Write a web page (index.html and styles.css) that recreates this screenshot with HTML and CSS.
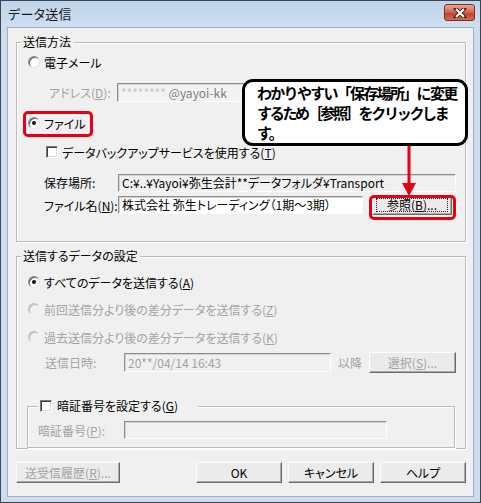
FILE: index.html
```
<!DOCTYPE html>
<html lang="ja">
<head>
<meta charset="utf-8">
<title>データ送信</title>
<link rel="stylesheet" href="styles.css">
</head>
<body>
<div class="window">
  <div class="titlebar">
    <span class="title">データ送信</span>
    <span class="close"><svg width="14" height="10" viewBox="0 0 14 10"><path d="M3 1 L11 9 M11 1 L3 9" stroke="#4a1a12" stroke-width="4" stroke-linecap="square"/><path d="M3 1 L11 9 M11 1 L3 9" stroke="#fff" stroke-width="2.2"/></svg></span>
  </div>
  <div class="client">
    <div class="group g1">
      <div class="legend">送信方法</div>
      <div class="row r-mail"><span class="radio"></span><span class="lbl">電子メール</span></div>
      <div class="row r-addr indent2 dis">
        <span class="flabel w68">アドレス(<u>D</u>):</span>
        <span class="field addr"><span class="stars">********</span> @yayoi-kk</span>
      </div>
      <div class="row r-file"><span class="radio on"></span><span class="lbl">ファイル</span></div>
      <div class="row r-chk"><span class="check"></span><span class="lbl">データバックアップサービスを使用する(<u>T</u>)</span></div>
      <div class="row r-loc">
        <span class="flabel w74">保存場所:</span>
        <span class="field ro wide">C:¥..¥Yayoi¥弥生会計**データフォルダ¥Transport</span>
      </div>
      <div class="row r-name">
        <span class="flabel w74">ファイル名(<u>N</u>):</span>
        <span class="field white fname">株式会社 弥生トレーディング（1期〜3期）</span>
        <span class="btn ref"><span class="focus">参照(<u>B</u>)...</span></span>
      </div>
    </div>

    <div class="group g2">
      <div class="legend">送信するデータの設定</div>
      <div class="row r-a"><span class="radio on"></span><span class="lbl">すべてのデータを送信する(<u>A</u>)</span></div>
      <div class="row r-z dis"><span class="radio"></span><span class="lbl">前回送信分より後の差分データを送信する(<u>Z</u>)</span></div>
      <div class="row r-k dis"><span class="radio"></span><span class="lbl">過去送信分より後の差分データを送信する(<u>K</u>)</span></div>
      <div class="row r-date dis">
        <span class="flabel w79">送信日時:</span>
        <span class="field date">20**/04/14 16:43</span>
        <span class="after">以降</span>
        <span class="btn sel">選択(<u>S</u>)...</span>
      </div>
      <div class="group g3">
        <div class="legend chklegend"><span class="check"></span><span class="lbl">暗証番号を設定する(<u>G</u>)</span></div>
        <div class="row r-pin dis">
          <span class="flabel w86">暗証番号(<u>P</u>):</span>
          <span class="field pin"></span>
        </div>
      </div>
    </div>

    <div class="buttons">
      <span class="btn b-hist dis">送受信履歴(<u>R</u>)...</span>
      <span class="btn b-ok">OK</span>
      <span class="btn b-std">キャンセル</span>
      <span class="btn b-std">ヘルプ</span>
    </div>
  </div>

  <div class="hl hl-file"></div>
  <div class="hl hl-ref"></div>
  <svg class="arrow" width="20" height="56" viewBox="0 0 20 56"><path d="M10 0 V42" stroke="#e60012" stroke-width="3"/><path d="M3 38 L17 38 L10 51 Z" fill="#e60012"/></svg>
  <div class="callout">わかりやすい「保存場所」に変更<br><span class="tight">するため［参照］をクリックしま</span><br>す。</div>
</div>
</body>
</html>
```
FILE: styles.css
```
* { box-sizing: border-box; }
html, body { margin: 0; padding: 0; background: #fff; }
body {
  font-family: "Noto Sans CJK JP", "Noto Sans", sans-serif;
  font-size: 12px;
  color: #000;
  font-feature-settings: "palt";
}
u { text-decoration: underline; text-underline-offset: 1px; }

.window {
  position: relative;
  width: 481px;
  height: 503px;
  border: 1px solid #3d4650;
  background: #cbdcee;
  display: flex;
  flex-direction: column;
}
.titlebar {
  height: 26px;
  flex: none;
  display: flex;
  justify-content: space-between;
  align-items: flex-start;
  padding-left: 7px;
  padding-right: 5px;
  background: linear-gradient(#bed3ea, #cfdff0);
}
.title {
  font-size: 13px;
  line-height: 26px;
  color: #1a1a1a;
  letter-spacing: 0.3px;
}
.close {
  margin-top: 3px;
  width: 31px;
  height: 17px;
  border: 1px solid #7a3026;
  border-radius: 3px;
  background: linear-gradient(#e9a99a, #d2624d 50%, #c0402b 51%, #d46a50);
  display: flex;
  align-items: center;
  justify-content: center;
}
.client {
  flex: 1;
  margin: 0 6px 5px 6px;
  background: #f0f0f0;
  border: 1px solid #9fb1c6;
  padding: 0 7px 0 8px;
  display: flex;
  flex-direction: column;
}

.group {
  border: 1px solid #bcbcbc;
  box-shadow: inset 1px 1px 0 #fff, 1px 1px 0 #fff;
  display: flex;
  flex-direction: column;
}
.legend {
  margin: -9px 0 0 4px;
  padding: 0 2px;
  background: #f0f0f0;
  line-height: 16px;
  height: 16px;
  align-self: flex-start;
}
.g1 { margin-top: 14px; height: 200px; }
.g2 { margin-top: 14px; height: 193px; }
.g3 { margin: 33px 10px 0 10px; height: 49px; }
.chklegend {
  margin-left: 10px;
  padding-left: 2px;
  width: 160px;
  display: flex;
  align-items: center;
}

.row {
  height: 20px;
  display: flex;
  align-items: center;
  flex: none;
}
.dis { color: #a3a3a3; }
.r-mail { margin-top: 2px; padding-left: 11px; }
.r-addr { margin-top: 11px; padding-left: 32px; height: 19px; }
.r-file { margin-top: 11px; padding-left: 11px; }
.r-chk { margin-top: 9px; padding-left: 29px; }
.r-loc { margin-top: 11px; padding-left: 27px; height: 19px; }
.r-name { margin-top: 3px; padding-left: 27px; }
.r-a { margin-top: 8px; padding-left: 11px; }
.r-z { margin-top: 7px; padding-left: 11px; }
.r-k { margin-top: 8px; padding-left: 11px; }
.r-date { margin-top: 5px; padding-left: 28px; height: 21px; }
.r-pin { margin-top: 6px; padding-left: 10px; }

.lbl { margin-left: 4px; white-space: nowrap; }
.flabel { white-space: nowrap; flex: none; }
.w68 { width: 68px; }
.w74 { width: 74px; }
.w79 { width: 79px; }
.w86 { width: 86px; }

.radio {
  flex: none;
  width: 12px;
  height: 12px;
  border-radius: 50%;
  border: 1px solid;
  border-color: #8a8a8a #e4e4e4 #e4e4e4 #8a8a8a;
  background: #fff;
  box-shadow: inset 1px 1px 0 #5c5c5c;
  position: relative;
}
.dis .radio { box-shadow: inset 1px 1px 0 #bdbdbd; border-color: #c0c0c0 #f4f4f4 #f4f4f4 #c0c0c0; background: #f0f0f0; }
.radio.on::after {
  content: "";
  position: absolute;
  left: 3px;
  top: 3px;
  width: 4px;
  height: 4px;
  border-radius: 50%;
  background: #111;
}
.check {
  flex: none;
  width: 12px;
  height: 12px;
  border: 1px solid;
  border-color: #7a7a7a #fff #fff #7a7a7a;
  background: #fff;
  box-shadow: inset 1px 1px 0 #3f3f3f, inset -1px -1px 0 #dcdcdc;
}
.chklegend .lbl { margin-left: 5px; }

.field {
  flex: none;
  height: 19px;
  border: 1px solid;
  border-color: #8d8d8d #fdfdfd #fdfdfd #8d8d8d;
  box-shadow: inset 1px 1px 0 #d4d4d4;
  padding-left: 3px;
  line-height: 17px;
  white-space: nowrap;
  overflow: hidden;
}
.addr { width: 338px; color: #7d7d7d; background: #f3f3f3; }
.stars { color: #c6c6c6; }
.ro { background: #f0f0f0; }
.wide { width: 338px; height: 18px; line-height: 16px; }
.white { background: #fff; }
.fname { width: 245px; height: 18px; line-height: 16px; }
.date { width: 207px; margin-left: 0; }
.after { margin-left: 7px; width: 31px; }
.pin { width: 263px; height: 18px; }

.btn {
  flex: none;
  display: flex;
  align-items: center;
  justify-content: center;
  background: #ebebeb;
  border: 1px solid;
  border-color: #fdfdfd #6a6a6a #6a6a6a #fdfdfd;
  box-shadow: inset -1px -1px 0 #a9a9a9;
  white-space: nowrap;
}
.ref { margin-left: 9px; width: 80px; height: 20px; }
.focus {
  display: block;
  width: 72px;
  height: 14px;
  line-height: 12px;
  text-align: center;
  border: 1px dotted #222;
}
.sel { margin-left: 0; width: 87px; height: 21px; }

.buttons {
  margin-top: 13px;
  display: flex;
  gap: 6px;
}
.buttons .btn { height: 21px; }
.b-hist { width: 104px; margin-right: 70px; }
.b-ok, .b-std { width: 86px; }

.hl {
  position: absolute;
  border: 3px solid #e60012;
  border-radius: 5px;
}
.hl-file { left: 22px; top: 110px; width: 70px; height: 26px; }
.hl-ref { left: 368px; top: 194px; width: 87px; height: 25px; }
.arrow { position: absolute; left: 398px; top: 144px; }
.callout {
  position: absolute;
  left: 241px;
  top: 78px;
  width: 226px;
  height: 67px;
  border: 3px solid #000;
  border-radius: 11px;
  background: #fff;
  padding: 1px 0 0 12px;
  font-size: 15px;
  font-weight: bold;
  line-height: 20px;
  letter-spacing: -1.7px;
  font-feature-settings: normal;
  white-space: nowrap;
}
.tight { letter-spacing: -2.3px; }
```
